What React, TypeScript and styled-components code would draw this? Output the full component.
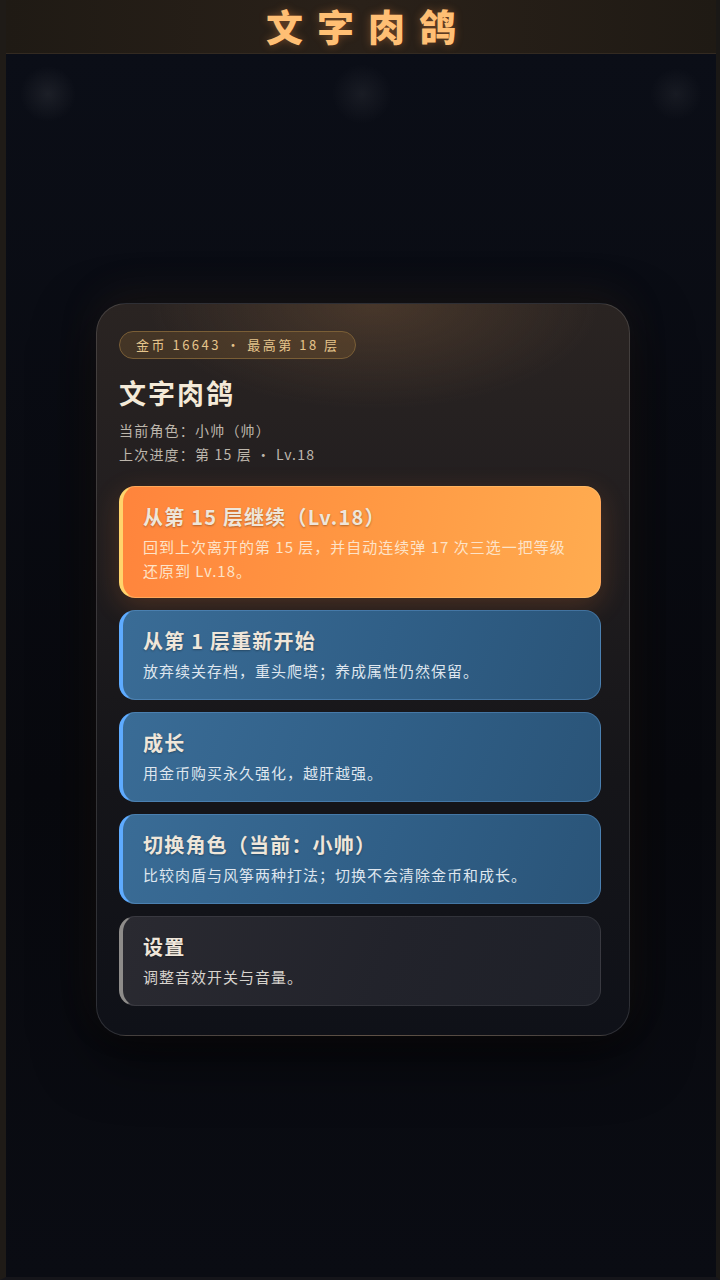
import React from "react";
import styled, { createGlobalStyle, css } from "styled-components";

const GlobalStyle = createGlobalStyle`
  * { box-sizing: border-box; }
  html, body {
    margin: 0;
    padding: 0;
    background: #0a0c12;
    font-family: "Noto Sans CJK SC", "Noto Sans", sans-serif;
  }
`;

const Frame = styled.div`
  display: flex;
  flex-direction: column;
  min-height: 1280px;
  border-left: 6px solid #1f1b17;
  border-right: 4px solid #1a1816;
  border-bottom: 3px solid #15151a;
  background: #0a0d15;
`;

const Header = styled.header`
  height: 54px;
  display: flex;
  align-items: center;
  justify-content: center;
  background: linear-gradient(90deg, #1f1a14 0%, #2a2119 50%, #1f1a14 100%);
  border-bottom: 1px solid #332a21;
`;

const HeaderTitle = styled.h1`
  margin: 0;
  padding-left: 14px;
  font-size: 37px;
  font-weight: 900;
  letter-spacing: 14px;
  line-height: 53px;
  color: #ffbf74;
  text-shadow: 0 0 8px rgba(255, 150, 70, 0.35);
`;

const Stage = styled.main`
  flex: 1;
  display: flex;
  align-items: center;
  justify-content: center;
  padding: 7px 0 0 4px;
  background:
    radial-gradient(circle at 42px 40px, rgba(255, 255, 255, 0.07) 0, rgba(255, 255, 255, 0) 28px),
    radial-gradient(circle at 356px 40px, rgba(255, 255, 255, 0.06) 0, rgba(255, 255, 255, 0) 30px),
    radial-gradient(circle at 670px 40px, rgba(255, 255, 255, 0.05) 0, rgba(255, 255, 255, 0) 26px),
    linear-gradient(180deg, #0b0e17 0%, #08090e 60%, #0a0c13 100%);
`;

const Card = styled.section`
  width: 534px;
  padding: 27px 28px 29px 22px;
  border-radius: 30px;
  border: 1px solid rgba(255, 255, 255, 0.13);
  background:
    radial-gradient(ellipse 300px 140px at 52% 0%, rgba(150, 105, 65, 0.28), rgba(0, 0, 0, 0) 75%),
    linear-gradient(180deg, #2a2422 0%, #231f20 25%, #151519 65%, #0f1118 100%);
  box-shadow: 0 -10px 40px rgba(120, 80, 40, 0.12), 0 20px 60px rgba(0, 0, 0, 0.6);
`;

const Pill = styled.div`
  display: inline-flex;
  align-items: center;
  height: 28px;
  padding: 0 15px 0 16px;
  border-radius: 14px;
  border: 1px solid #7a5e36;
  background: rgba(140, 100, 50, 0.28);
  color: #e6c58c;
  font-size: 13px;
  letter-spacing: 2.5px;
`;

const Title = styled.h2`
  margin: 16px 0 7px;
  font-size: 27px;
  font-weight: 700;
  line-height: 36px;
  letter-spacing: 2px;
  color: #f4ead8;
`;

const Meta = styled.div`
  font-size: 14px;
  line-height: 24px;
  letter-spacing: 1.2px;
  color: #bdb6ac;
`;

const Actions = styled.div`
  display: flex;
  flex-direction: column;
  gap: 12px;
  margin-top: 20px;
`;

type Tone = "primary" | "blue" | "gray";

const toneStyles = {
  primary: css`
    background: linear-gradient(100deg, #ff843c 0%, #ff9843 50%, #ffac50 100%);
    border: 1px solid rgba(255, 200, 120, 0.5);
    border-left: 4px solid #ffd46c;
    box-shadow: 0 8px 28px rgba(255, 130, 50, 0.2);
    padding-bottom: 14px;
  `,
  blue: css`
    background: linear-gradient(110deg, #3a6c96 0%, #305f87 55%, #2a5478 100%);
    border: 1px solid rgba(110, 170, 230, 0.35);
    border-left: 4px solid #5eabff;
  `,
  gray: css`
    background: linear-gradient(110deg, #2a2a31 0%, #22232b 55%, #1e2028 100%);
    border: 1px solid rgba(255, 255, 255, 0.08);
    border-left: 4px solid #8e8c8a;
  `,
};

const ActionButton = styled.button<{ $tone: Tone }>`
  display: flex;
  flex-direction: column;
  align-items: flex-start;
  width: 100%;
  padding: 16px 20px 16px 20px;
  border-radius: 16px;
  text-align: left;
  font-family: inherit;
  cursor: pointer;
  ${({ $tone }) => toneStyles[$tone]}
`;

const ActionTitle = styled.span`
  font-size: 20px;
  font-weight: 700;
  line-height: 28px;
  letter-spacing: 1.2px;
  color: #efe6da;
  text-shadow: 0 1px 2px rgba(0, 0, 0, 0.3);
`;

const ActionDesc = styled.span<{ $tone: Tone }>`
  margin-top: 4px;
  font-size: 15px;
  line-height: 24px;
  letter-spacing: 1px;
  color: ${({ $tone }) =>
    $tone === "primary" ? "#fde3c8" : $tone === "blue" ? "#dfe6ee" : "#d8d4ce"};
`;

const actions: { tone: Tone; title: string; desc: string }[] = [
  {
    tone: "primary",
    title: "从第 15 层继续（Lv.18）",
    desc: "回到上次离开的第 15 层，并自动连续弹 17 次三选一把等级还原到 Lv.18。",
  },
  {
    tone: "blue",
    title: "从第 1 层重新开始",
    desc: "放弃续关存档，重头爬塔；养成属性仍然保留。",
  },
  { tone: "blue", title: "成长", desc: "用金币购买永久强化，越肝越强。" },
  {
    tone: "blue",
    title: "切换角色（当前：小帅）",
    desc: "比较肉盾与风筝两种打法；切换不会清除金币和成长。",
  },
  { tone: "gray", title: "设置", desc: "调整音效开关与音量。" },
];

const App: React.FC = () => {
  return (
    <>
      <GlobalStyle />
      <Frame>
        <Header>
          <HeaderTitle>文字肉鸽</HeaderTitle>
        </Header>
        <Stage>
          <Card>
            <Pill>金币 16643 · 最高第 18 层</Pill>
            <Title>文字肉鸽</Title>
            <Meta>当前角色：小帅（帅）</Meta>
            <Meta>上次进度：第 15 层 · Lv.18</Meta>
            <Actions>
              {actions.map((a) => (
                <ActionButton key={a.title} $tone={a.tone}>
                  <ActionTitle>{a.title}</ActionTitle>
                  <ActionDesc $tone={a.tone}>{a.desc}</ActionDesc>
                </ActionButton>
              ))}
            </Actions>
          </Card>
        </Stage>
      </Frame>
    </>
  );
};

export default App;
